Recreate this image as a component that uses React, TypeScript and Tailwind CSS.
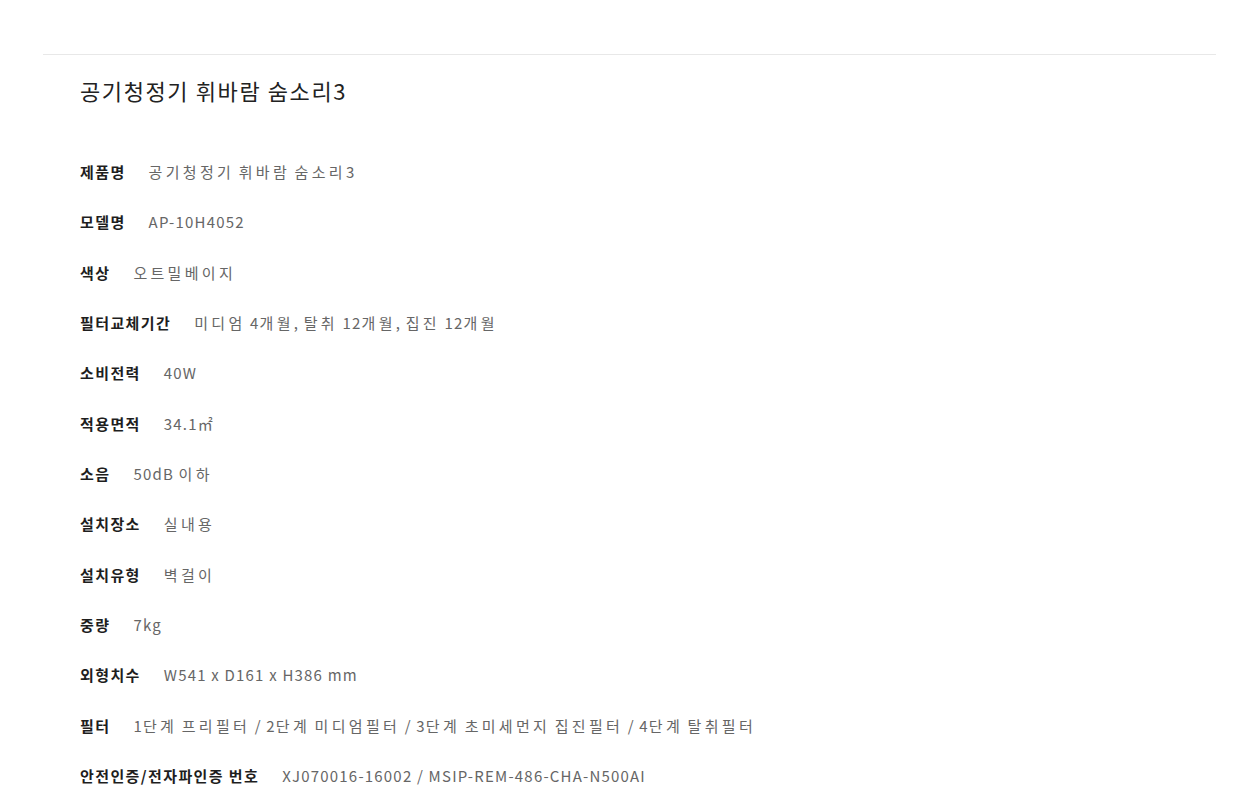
import * as React from "react"

/* Product spec sheet: title plus label/value rows. */

const specs: [string, string][] = [
  ["제품명", "공기청정기 휘바람 숨소리3"],
  ["모델명", "AP-10H4052"],
  ["색상", "오트밀베이지"],
  ["필터교체기간", "미디엄 4개월, 탈취 12개월, 집진 12개월"],
  ["소비전력", "40W"],
  ["적용면적", "34.1㎡"],
  ["소음", "50dB 이하"],
  ["설치장소", "실내용"],
  ["설치유형", "벽걸이"],
  ["중량", "7kg"],
  ["외형치수", "W541 x D161 x H386 mm"],
  ["필터", "1단계 프리필터 / 2단계 미디엄필터 / 3단계 초미세먼지 집진필터 / 4단계 탈취필터"],
  ["안전인증/전자파인증 번호", "XJ070016-16002 / MSIP-REM-486-CHA-N500AI"],
]

// hangul runs get wider tracking than latin, like the original font does
function Spaced({ text }: { text: string }) {
  const parts = text.split(/([가-힣]+)/)
  return (
    <>
      {parts.map((p, i) =>
        /[가-힣]/.test(p) ? (
          <span key={i} className="tracking-[3.3px]">
            {p}
          </span>
        ) : (
          <React.Fragment key={i}>{p}</React.Fragment>
        )
      )}
    </>
  )
}

function SpecRow({ label, value }: { label: string; value: string }) {
  return (
    <div className="flex h-[50.33px] items-center gap-[23px] text-[15px] leading-[22px]">
      <span className="font-bold tracking-[1.4px] text-[#1e1e1e]">{label}</span>
      <span className="tracking-[1.2px] text-[#666]">
        <Spaced text={value} />
      </span>
    </div>
  )
}

export default function App() {
  return (
    <div
      className="min-h-[810px] w-[1260px] bg-white pt-[54px]"
      style={{ fontFamily: '"Noto Sans CJK KR", "Noto Sans", sans-serif' }}
    >
      <div className="mx-[43px] w-[1173px] border-t border-[#e8e8e8] px-[37px]">
        <h1 className="mt-[21px] text-[22px] leading-[28px] font-normal tracking-[1.6px] text-[#222]">
          공기청정기 휘바람 숨소리3
        </h1>
        <div className="mt-[43px] flex flex-col">
          {specs.map(([k, v]) => (
            <SpecRow key={k} label={k} value={v} />
          ))}
        </div>
      </div>
    </div>
  )
}
